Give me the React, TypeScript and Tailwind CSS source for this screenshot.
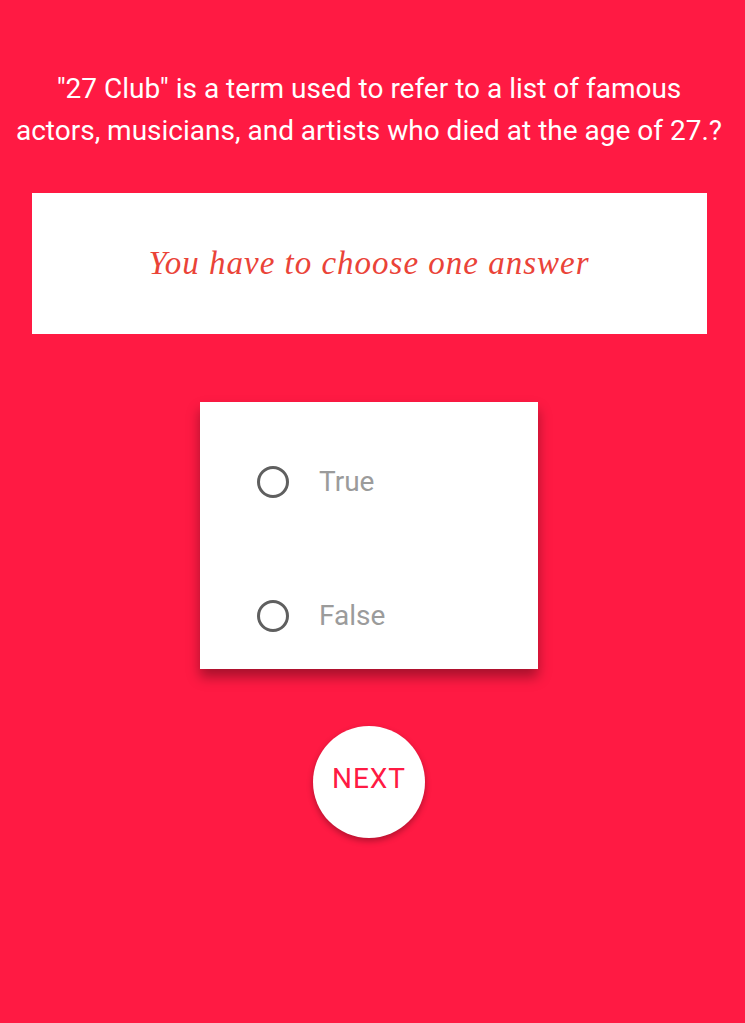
import React from "react";

function Radio({ label }: { label: string }) {
  return (
    <div className="flex items-center h-[32px] pl-[57px]">
      <span className="block w-[32px] h-[32px] rounded-full border-[3px] border-[#5f5f5f]" />
      <span className="ml-[30px] text-[28px] text-[#9b9b9b]" style={{ fontFamily: "Roboto, sans-serif" }}>
        {label}
      </span>
    </div>
  );
}

export default function App() {
  return (
    <div className="min-h-[1023px] w-full bg-[#ff1a43]" style={{ fontFamily: "Roboto, sans-serif" }}>
      <div className="w-[738px] flex flex-col items-center">
        <div className="pt-[68px] text-white text-[28px] leading-[42px] text-center whitespace-nowrap">
          <div>"27 Club" is a term used to refer to a list of famous</div>
          <div>actors, musicians, and artists who died at the age of 27.?</div>
        </div>
        <div className="mt-[41px] w-[675px] h-[141px] bg-white flex items-center justify-center">
          <span
            className="text-[33px] italic text-[#ea4338] tracking-[1px]"
            style={{ fontFamily: "'Liberation Serif', serif" }}
          >
            You have to choose one answer
          </span>
        </div>
        <div className="mt-[68px] w-[338px] h-[267px] bg-white shadow-[0_8px_12px_rgba(0,0,0,0.35)] flex flex-col pt-[64px] gap-[102px]">
          <Radio label="True" />
          <Radio label="False" />
        </div>
        <button className="mt-[57px] w-[112px] h-[112px] rounded-full bg-white shadow-[0_3px_6px_rgba(0,0,0,0.3)] text-[#ff1a43] text-[28px] tracking-[1px] flex items-center justify-center pb-[6px]">
          NEXT
        </button>
      </div>
    </div>
  );
}
